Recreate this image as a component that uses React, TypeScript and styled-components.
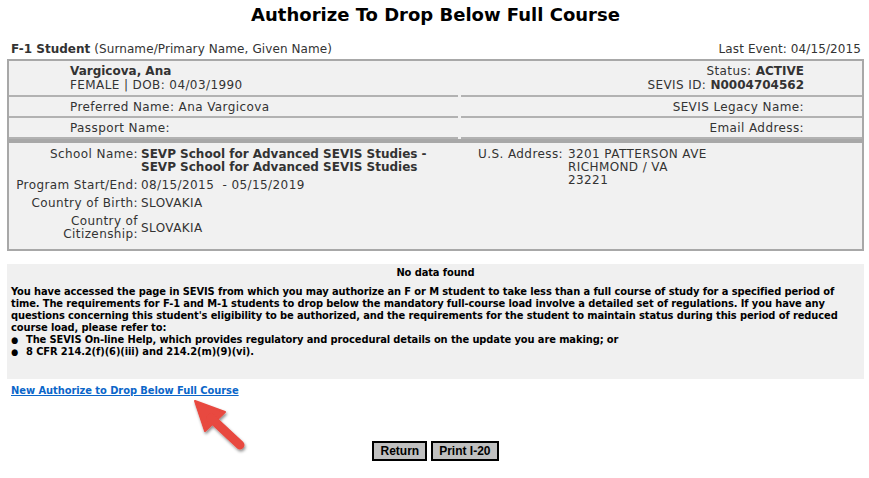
import React from "react";
import styled, { createGlobalStyle } from "styled-components";

const Global = createGlobalStyle`
  html, body { margin: 0; padding: 0; background: #fff; }
  body { font-family: "DejaVu Sans", Verdana, sans-serif; color: #333; }
`;

const Page = styled.div`
  position: relative;
  width: 869px;
  height: 478px;
  padding: 0 5px 0 7px;
  box-sizing: border-box;
`;

const Title = styled.h1`
  margin: 4px 0 0;
  font-size: 18px;
  line-height: 22px;
  font-weight: bold;
  text-align: center;
  color: #000;
`;

const HeaderRow = styled.div`
  display: flex;
  justify-content: space-between;
  margin-top: 16px;
  padding: 0 3px 0 4px;
  font-size: 12px;
  line-height: 14px;
  letter-spacing: 0.1px;
  color: #333;
`;

const Box = styled.div<{ $mt?: number }>`
  background: #f1f1f1;
  border: 2px solid #a8a8a8;
  margin-top: ${(p) => p.$mt ?? 0}px;
  font-size: 12px;
  letter-spacing: 0.4px;
  color: #333;
`;

const TopGrid = styled.div`
  display: grid;
  grid-template-columns: 449px 1fr;
  column-gap: 3px;
`;

const Cell = styled.div<{ $right?: boolean; $pad: string }>`
  border-bottom: 2px solid #b2b2b2;
  padding: ${(p) => p.$pad};
  text-align: ${(p) => (p.$right ? "right" : "left")};
  line-height: 14px;
  ${(p) => (p.$right ? "padding-right: 58px;" : "padding-left: 61px;")}
`;

const Bold = styled.b`
  font-weight: bold;
  letter-spacing: 0;
`;

const Split = styled.div`
  display: grid;
  grid-template-columns: 449px 1fr;
  padding: 5px 0 8px;
`;

const FieldList = styled.div<{ $labelWidth: number; $gap: number }>`
  display: grid;
  grid-template-columns: ${(p) => p.$labelWidth}px 1fr;
  column-gap: ${(p) => p.$gap}px;
  row-gap: 5px;
  align-content: start;
  line-height: 13px;
`;

const Label = styled.div`
  text-align: right;
  align-self: start;
`;

const Value = styled.div<{ $bold?: boolean }>`
  align-self: center;
  font-weight: ${(p) => (p.$bold ? "bold" : "normal")};
  letter-spacing: ${(p) => (p.$bold ? "0" : "0.4px")};
`;

const Message = styled.div`
  margin-top: 13px;
  background: #f0f0f0;
  padding: 3px 4px 21px;
  font-family: "DejaVu Sans Condensed", "DejaVu Sans", sans-serif;
  font-size: 11px;
  font-weight: bold;
  line-height: 12px;
  letter-spacing: -0.1px;
  color: #000;
`;

const Center = styled.div`
  text-align: center;
  margin-bottom: 7px;
`;

const Bullets = styled.ul`
  list-style: none;
  margin: 0;
  padding: 0;
`;

const Bullet = styled.li`
  display: flex;
  &::before {
    content: "●";
    width: 15px;
    flex: none;
    font-size: 9px;
  }
`;

const Link = styled.a`
  display: inline-block;
  margin: 0 0 0 4px;
  font-family: "DejaVu Sans Condensed", "DejaVu Sans", sans-serif;
  font-size: 11px;
  line-height: 12px;
  font-weight: bold;
  letter-spacing: -0.05px;
  color: #0b66c9;
  text-decoration: underline;
`;

const Buttons = styled.div`
  display: flex;
  justify-content: center;
  gap: 4px;
  margin-top: 43px;
`;

const Button = styled.button`
  height: 20px;
  padding: 0 6px;
  background: #c0c0c0;
  border: 2px solid #000;
  font-family: "Liberation Sans", Tahoma, sans-serif;
  font-size: 12px;
  font-weight: bold;
  color: #000;
  line-height: 14px;
`;

const Arrow = styled.svg`
  position: absolute;
  left: 185px;
  top: 388px;
`;

export default function App() {
  return (
    <Page>
      <Global />
      <Title>Authorize To Drop Below Full Course</Title>
      <HeaderRow>
        <span>
          <Bold>F-1 Student</Bold> (Surname/Primary Name, Given Name)
        </span>
        <span>Last Event: 04/15/2015</span>
      </HeaderRow>
      <Box $mt={3}>
        <TopGrid>
          <Cell $pad="3px 0 3px">
            <Bold>Vargicova, Ana</Bold>
            <br />
            FEMALE | DOB: 04/03/1990
          </Cell>
          <Cell $right $pad="3px 0 3px">
            Status: <Bold>ACTIVE</Bold>
            <br />
            SEVIS ID: <Bold>N0004704562</Bold>
          </Cell>
          <Cell $pad="3px 0 2px">Preferred Name: Ana Vargicova</Cell>
          <Cell $right $pad="3px 0 2px">SEVIS Legacy Name:</Cell>
          <Cell $pad="3px 0 2px">Passport Name:</Cell>
          <Cell $right $pad="3px 0 2px">Email Address:</Cell>
        </TopGrid>
      </Box>
      <Box>
        <Split>
          <FieldList $labelWidth={129} $gap={3}>
            <Label>School Name:</Label>
            <Value $bold>
              SEVP School for Advanced SEVIS Studies -<br />
              SEVP School for Advanced SEVIS Studies
            </Value>
            <Label>Program Start/End:</Label>
            <Value>08/15/2015&nbsp; - 05/15/2019</Value>
            <Label>Country of Birth:</Label>
            <Value>SLOVAKIA</Value>
            <Label>Country of Citizenship:</Label>
            <Value>SLOVAKIA</Value>
          </FieldList>
          <FieldList $labelWidth={105} $gap={5}>
            <Label>U.S. Address:</Label>
            <Value>
              3201 PATTERSON AVE
              <br />
              RICHMOND / VA
              <br />
              23221
            </Value>
          </FieldList>
        </Split>
      </Box>
      <Message>
        <Center>No data found</Center>
        You have accessed the page in SEVIS from which you may authorize an F or M student to take less than a full
        course of study for a specified period of time. The requirements for F-1 and M-1 students to drop below the
        mandatory full-course load involve a detailed set of regulations. If you have any questions concerning this
        student's eligibility to be authorized, and the requirements for the student to maintain status during this
        period of reduced course load, please refer to:
        <Bullets>
          <Bullet>The SEVIS On-line Help, which provides regulatory and procedural details on the update you are making; or</Bullet>
          <Bullet>8 CFR 214.2(f)(6)(iii) and 214.2(m)(9)(vi).</Bullet>
        </Bullets>
      </Message>
      <Link href="#">New Authorize to Drop Below Full Course</Link>
      <Buttons>
        <Button>Return</Button>
        <Button>Print I-20</Button>
      </Buttons>
      <Arrow width="70" height="70" viewBox="0 0 70 70">
        <defs>
          <filter id="sh" x="-30%" y="-30%" width="160%" height="160%">
            <feDropShadow dx="1" dy="2" stdDeviation="1.5" floodColor="#000" floodOpacity="0.45" />
          </filter>
        </defs>
        <g filter="url(#sh)" fill="#e8483f" stroke="#e8483f" strokeLinejoin="round">
          <polygon points="10,9 40,20 20,39" strokeWidth="2" />
          <line x1="26" y1="26" x2="55" y2="53" strokeWidth="9" strokeLinecap="round" />
        </g>
      </Arrow>
    </Page>
  );
}
